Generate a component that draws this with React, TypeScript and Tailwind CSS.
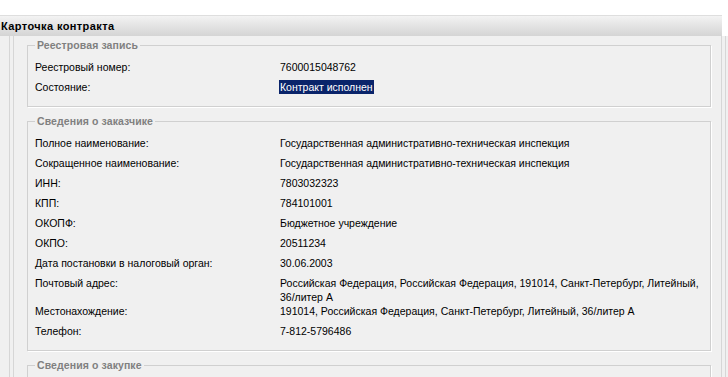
type Row = { label: string; value: React.ReactNode; tall?: boolean }

const registry: Row[] = [
  { label: "Реестровый номер:", value: "7600015048762" },
  {
    label: "Состояние:",
    value: (
      <span className="inline-block h-[14px] -ml-[1px] px-[1px] bg-[#0a246a] text-white">
        Контракт исполнен
      </span>
    ),
  },
]

const customer: Row[] = [
  { label: "Полное наименование:", value: "Государственная административно-техническая инспекция" },
  { label: "Сокращенное наименование:", value: "Государственная административно-техническая инспекция" },
  { label: "ИНН:", value: "7803032323" },
  { label: "КПП:", value: "784101001" },
  { label: "ОКОПФ:", value: "Бюджетное учреждение" },
  { label: "ОКПО:", value: "20511234" },
  { label: "Дата постановки в налоговый орган:", value: "30.06.2003" },
  {
    label: "Почтовый адрес:",
    value: (
      <>
        Российская Федерация, Российская Федерация, 191014, Санкт-Петербург, Литейный,
        <br />
        36/литер А
      </>
    ),
    tall: true,
  },
  { label: "Местонахождение:", value: "191014, Российская Федерация, Санкт-Петербург, Литейный, 36/литер А" },
  { label: "Телефон:", value: "7-812-5796486" },
]

function Section({ title, rows, children }: { title: string; rows?: Row[]; children?: React.ReactNode }) {
  return (
    <fieldset className="border border-[#d0d0d0] shadow-[1px_1px_0_#ffffff] pl-[7px] pr-[7px] pt-[5px] pb-[9px]">
      <legend className="px-[2px] text-[10.5px] font-bold tracking-[0.1px] text-[#808080]">{title}</legend>
      {rows?.map((r) => (
        <div
          key={r.label}
          className={`grid grid-cols-[245px_1fr] pt-[3px] ${r.tall ? "h-[28px]" : "h-[20px]"}`}
        >
          <div className="whitespace-nowrap">{r.label}</div>
          <div className="whitespace-nowrap">{r.value}</div>
        </div>
      ))}
      {children}
    </fieldset>
  )
}

export default function App() {
  return (
    <div className="flex min-h-screen flex-col bg-white font-['Liberation_Sans',Arial,sans-serif] text-[10.5px] leading-[14px] text-black">
      <div className="h-[15px]" />
      <div className="h-[21px] w-[722px] border-t border-[#dedede] bg-linear-to-b from-[#f3f3f3] to-[#d4d4d4] pl-[1px] pt-[3px] text-[11px] font-bold tracking-[0.4px]">
        Карточка контракта
      </div>
      <div className="flex flex-1 flex-col bg-[#f0f0f0] pl-[9px] pr-[2px]">
        <div className="flex flex-1 flex-col border-x border-[#d6d6d6] px-[3px]">
          <div className="flex flex-1 flex-col gap-[7px] border-x border-[#d6d6d6] pl-[13px] pr-[10px] pt-[2px]">
            <Section title="Реестровая запись" rows={registry} />
            <Section title="Сведения о заказчике" rows={customer} />
            <Section title="Сведения о закупке">
              <div className="h-[60px]" />
            </Section>
          </div>
        </div>
      </div>
    </div>
  )
}
